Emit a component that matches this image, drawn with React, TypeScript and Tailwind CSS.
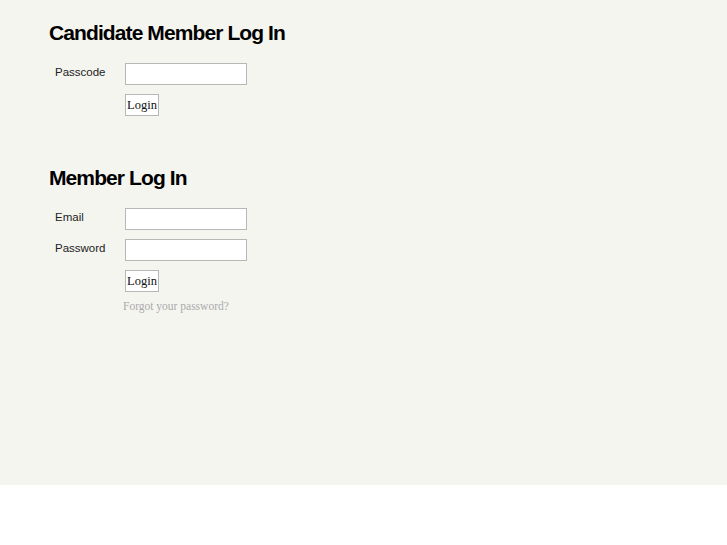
import React from "react";

function Row({ label, type = "text" }: { label: string; type?: string }) {
  return (
    <div className="flex items-start h-[31px]">
      <label className="shrink-0 w-[76px] pl-[6px] text-[11.5px] leading-[18px] text-[#222] font-['Liberation_Sans',Arial,sans-serif]">
        {label}
      </label>
      <input
        type={type}
        className="w-[122px] h-[22px] bg-white border border-[#b8b8b8] outline-none"
      />
    </div>
  );
}

function LoginButton() {
  return (
    <div className="flex">
      <div className="shrink-0 w-[76px]" />
      <button className="w-[34px] h-[22px] bg-white border border-[#b8b8b8] text-[12.5px] leading-[20px] text-[#111] font-['Liberation_Serif','Times_New_Roman',serif] px-0">
        Login
      </button>
    </div>
  );
}

export default function App() {
  return (
    <div className="bg-white min-h-[545px]">
      <div className="bg-[#f5f5f0] h-[485px] pl-[49px] pt-[18px]">
        <h1 className="text-[21px] leading-[29px] font-bold tracking-[-0.9px] text-black font-['Liberation_Sans',Arial,sans-serif]">
          Candidate Member Log In
        </h1>
        <div className="mt-[16px]">
          <Row label="Passcode" />
          <LoginButton />
        </div>
        <h1 className="mt-[47px] text-[21px] leading-[29px] font-bold tracking-[-0.9px] text-black font-['Liberation_Sans',Arial,sans-serif]">
          Member Log In
        </h1>
        <div className="mt-[16px]">
          <Row label="Email" />
          <Row label="Password" type="password" />
          <LoginButton />
          <div className="pl-[74px] mt-[6px] text-[11.5px] leading-[16px] text-[#aaa] font-['Liberation_Serif','Times_New_Roman',serif]">
            Forgot your password?
          </div>
        </div>
      </div>
    </div>
  );
}
